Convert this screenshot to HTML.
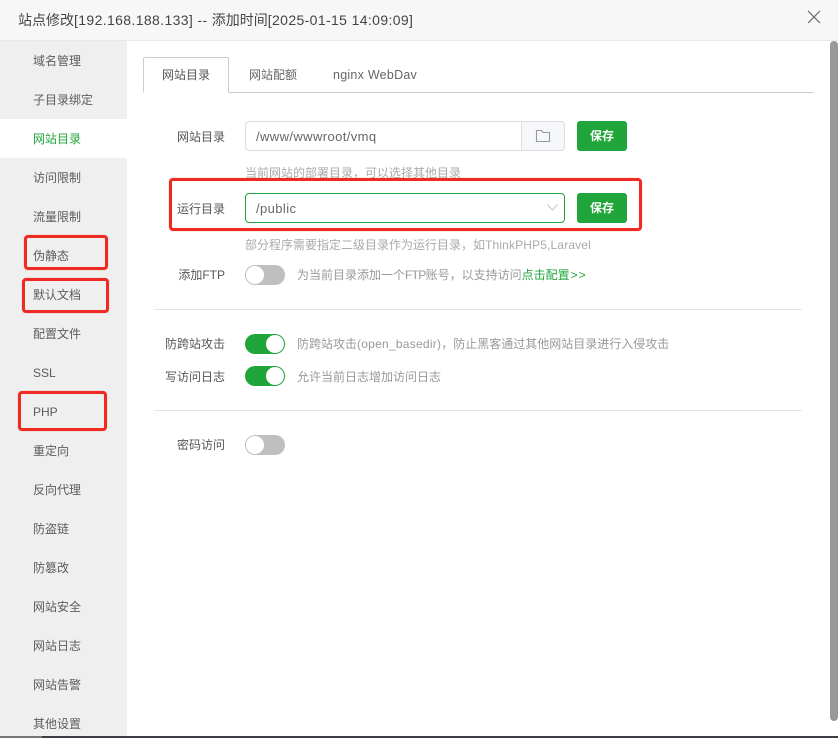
<!DOCTYPE html>
<html lang="zh-CN">
<head>
<meta charset="utf-8">
<title>站点修改</title>
<style>
html,body{margin:0;padding:0;background:#fff;}
body{width:838px;height:738px;position:relative;overflow:hidden;font-family:"Liberation Sans","Noto Sans CJK SC",sans-serif;font-size:12px;color:#555;}
.a{position:absolute;white-space:nowrap;}
#head{left:0;top:0;width:838px;height:40px;background:#f7f7f7;border-bottom:1px solid #e9e9e9;}
#title{left:18px;top:10px;font-size:14px;line-height:20px;color:#444;}
#title span{letter-spacing:.37px;}
#side{left:0;top:41px;width:127px;height:697px;background:#efefef;}
.m{position:absolute;left:0;width:127px;height:39px;line-height:41px;padding-left:33px;box-sizing:border-box;color:#5c5c5c;font-size:12px;}
.m.on{background:#fff;color:#20a53a;}
.lbl{width:80px;text-align:right;left:145px;font-size:12px;line-height:20px;color:#555;}
.hint{color:#aaa;font-size:12px;line-height:18px;}
.desc{color:#999;font-size:12px;line-height:20px;left:297px;}
.inp{box-sizing:border-box;height:30px;border:1px solid #ddd;border-radius:4px;background:#fff;font-size:13px;letter-spacing:.4px;line-height:30px;padding-left:10px;color:#666;left:245px;width:320px;}
.btn{left:577px;width:50px;height:30px;background:#20a53a;border-radius:3px;color:#fff;font-size:12px;font-weight:bold;line-height:31px;text-align:center;}
.tog{left:245px;width:40px;height:20px;border-radius:10px;background:#bfbfbf;}
.tog:after{content:"";position:absolute;left:1px;top:1px;width:18px;height:18px;border-radius:50%;background:#fff;}
.tog.on{background:#20a53a;}
.tog.on:after{left:21px;}
.hr{left:154px;width:648px;height:1px;background:#e4e4e4;}
.red{box-sizing:border-box;border:3px solid #ee2a22;border-radius:4px;box-shadow:0 0 1px rgba(238,42,34,.5);}
</style>
</head>
<body>
<div class="a" id="head"></div>
<div class="a" id="title">站点修改<span>[192.168.188.133] -- </span>添加时间<span>[2025-01-15 14:09:09]</span></div>
<svg class="a" style="left:807px;top:9px" width="14" height="14" viewBox="0 0 14 14"><path d="M1 2L13 14M13 2L1 14" stroke="#666" stroke-width="1.2" fill="none"/></svg>

<div class="a" id="side">
<div class="m" style="top:0">域名管理</div>
<div class="m" style="top:39px">子目录绑定</div>
<div class="m on" style="top:78px">网站目录</div>
<div class="m" style="top:117px">访问限制</div>
<div class="m" style="top:156px">流量限制</div>
<div class="m" style="top:195px">伪静态</div>
<div class="m" style="top:234px">默认文档</div>
<div class="m" style="top:273px">配置文件</div>
<div class="m" style="top:312px">SSL</div>
<div class="m" style="top:351px">PHP</div>
<div class="m" style="top:390px">重定向</div>
<div class="m" style="top:429px">反向代理</div>
<div class="m" style="top:468px">防盗链</div>
<div class="m" style="top:507px">防篡改</div>
<div class="m" style="top:546px">网站安全</div>
<div class="m" style="top:585px">网站日志</div>
<div class="m" style="top:624px">网站告警</div>
<div class="m" style="top:663px">其他设置</div>
</div>

<!-- tabs -->
<div class="a" style="left:143px;top:92px;width:671px;height:1px;background:#ccc"></div>
<div class="a" style="left:143px;top:57px;width:86px;height:36px;box-sizing:border-box;border:1px solid #ccc;border-bottom:1px solid #fff;border-radius:2px 2px 0 0;background:#fff;text-align:center;line-height:35px;color:#555">网站目录</div>
<div class="a" style="left:249px;top:57px;line-height:36px;color:#666">网站配额</div>
<div class="a" style="left:333px;top:57px;line-height:36px;color:#666;font-size:12.5px;letter-spacing:.25px">nginx WebDav</div>

<!-- row 1 -->
<div class="a lbl" style="top:127px">网站目录</div>
<div class="a inp" style="top:121px">/www/wwwroot/vmq</div>
<div class="a" style="left:521px;top:121px;width:44px;height:30px;box-sizing:border-box;border:1px solid #ddd;border-radius:0 4px 4px 0;background:#f5f7fa"></div>
<svg class="a" style="left:535px;top:129px" width="16" height="14" viewBox="0 0 16 14"><path d="M1.5 1.5H6.5L8 3.5H14.5V12.5H1.5Z" fill="none" stroke="#999" stroke-width="1.1"/></svg>
<div class="a btn" style="top:121px">保存</div>
<div class="a hint" style="left:245px;top:164px">当前网站的部署目录，可以选择其他目录</div>

<!-- row 2 -->
<div class="a lbl" style="top:199px">运行目录</div>
<div class="a inp" style="top:193px;border-color:#20a53a">/public</div>
<svg class="a" style="left:545.5px;top:203px" width="13" height="9" viewBox="0 0 13 9"><path d="M1.5 1.5L6.5 7L11.5 1.5" fill="none" stroke="#c8c8c8" stroke-width="1.1"/></svg>
<div class="a btn" style="top:193px">保存</div>
<div class="a hint" style="left:245px;top:236px">部分程序需要指定二级目录作为运行目录，如<span style="letter-spacing:.15px">ThinkPHP5,Laravel</span></div>

<!-- ftp -->
<div class="a lbl" style="top:265px">添加FTP</div>
<div class="a tog" style="top:265px"></div>
<div class="a desc" style="top:265px">为当前目录添加一个<span style="letter-spacing:-.7px">FTP</span>账号，以支持访问<span style="color:#20a53a">点击配置<span style="letter-spacing:1px;margin-left:1px">&gt;&gt;</span></span></div>
<div class="a hr" style="top:309px"></div>

<div class="a lbl" style="top:334px">防跨站攻击</div>
<div class="a tog on" style="top:334px"></div>
<div class="a desc" style="top:334px">防跨站攻击<span style="letter-spacing:.25px">(open_basedir)</span>，防止黑客通过其他网站目录进行入侵攻击</div>
<div class="a lbl" style="top:367px">写访问日志</div>
<div class="a tog on" style="top:366px"></div>
<div class="a desc" style="top:367px">允许当前日志增加访问日志</div>
<div class="a hr" style="top:410px"></div>

<div class="a lbl" style="top:435px">密码访问</div>
<div class="a tog" style="top:435px"></div>

<!-- scrollbar -->
<div class="a" style="left:830px;top:41px;width:8px;height:680px;background:#999;border-radius:4px"></div>

<!-- annotations -->
<div class="a red" style="left:169px;top:178px;width:473px;height:53px"></div>
<div class="a red" style="left:24px;top:235px;width:84px;height:35px"></div>
<div class="a red" style="left:22px;top:278px;width:87px;height:35px"></div>
<div class="a red" style="left:18px;top:391px;width:89px;height:40px"></div>

<!-- bottom strip -->
<div class="a" style="left:0;top:736px;width:838px;height:2px;background:#3a3f45"></div>
<div class="a" style="left:0;top:736px;width:42px;height:2px;background:#777"></div>
</body>
</html>
